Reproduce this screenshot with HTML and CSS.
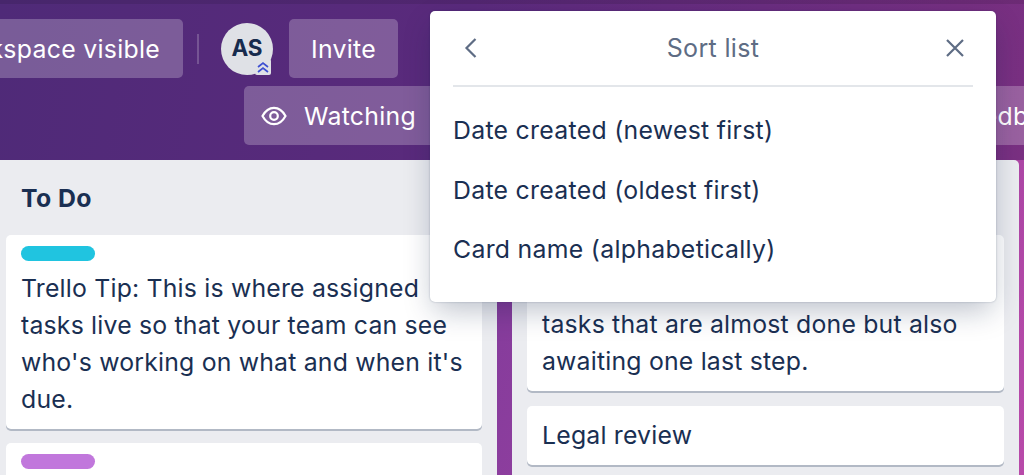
FILE: index.html
```html
<!DOCTYPE html>
<html lang="en">
<head>
<meta charset="utf-8">
<title>Sort list</title>
<link rel="stylesheet" href="styles.css">
</head>
<body>
<div class="board">
  <header class="board-header">
    <div class="header-row row-one">
      <button class="btn btn-workspace">Workspace visible</button>
      <span class="divider"></span>
      <span class="avatar">AS
        <svg class="avatar-badge" viewBox="0 0 16 16" aria-hidden="true">
          <path d="M3 8 L8 4 L13 8 M3 13 L8 9 L13 13" fill="none" stroke="#3d4fd1" stroke-width="1.7"/>
        </svg>
      </span>
      <button class="btn btn-invite">Invite</button>
    </div>
    <div class="header-row row-two">
      <button class="btn btn-watch">
        <svg class="eye" viewBox="0 0 26 20" aria-hidden="true">
          <path d="M1.5 10 C5 3.5 9 1.8 13 1.8 C17 1.8 21 3.5 24.5 10 C21 16.500 17 18.200 13 18.200 C9 18.200 5 16.500 1.500 10 Z" fill="none" stroke="#fff" stroke-width="2.200"/>
          <circle cx="13" cy="10" r="3.800" fill="none" stroke="#fff" stroke-width="2.200"/>
        </svg>
        Watching
      </button>
      <button class="btn btn-feedback">Feedback</button>
    </div>
  </header>
  <main class="lists">
    <section class="list list-todo">
      <h2 class="list-title">To Do</h2>
      <article class="card">
        <span class="label label-cyan"></span>
        <p class="card-text">Trello Tip: This is where assigned tasks live so that your team can see who's working on what and when it's due.</p>
      </article>
      <article class="card">
        <span class="label label-purple"></span>
      </article>
    </section>
    <section class="list list-doing">
      <article class="card card-covered">
        <p class="card-text">tasks that are almost done but also awaiting one last step.</p>
      </article>
      <article class="card">
        <p class="card-text">Legal review</p>
      </article>
    </section>
  </main>
</div>
<aside class="popover">
  <div class="popover-head">
    <svg class="icon-back" viewBox="0 0 14 22" aria-hidden="true"><path d="M11.500 2 L2.500 11 L11.500 20" fill="none" stroke="#5e6c84" stroke-width="2.200"/></svg>
    <span class="popover-title">Sort list</span>
    <svg class="icon-close" viewBox="0 0 20 20" aria-hidden="true"><path d="M2 2 L18 18 M18 2 L2 18" fill="none" stroke="#5e6c84" stroke-width="2.200"/></svg>
  </div>
  <ul class="menu">
    <li>Date created (newest first)</li>
    <li>Date created (oldest first)</li>
    <li>Card name (alphabetically)</li>
  </ul>
</aside>
</body>
</html>
```
FILE: styles.css
```css
* { box-sizing: border-box; }
html, body { margin: 0; height: 475px; overflow: hidden; }
body {
  font-family: Inter, "Liberation Sans", sans-serif;
  color: #1a2f52;
  position: relative;
  width: 1024px;
  background: linear-gradient(112deg, #67368f 0%, #7f3a9a 45%, #b84aa9 100%);
}
.board { width: 1024px; height: 475px; overflow: hidden; display: flex; flex-direction: column; }
.board-header {
  height: 160px; padding-top: 19px; display: flex; flex-direction: column; gap: 8px; flex: none;
  background: linear-gradient(rgba(0,0,0,.1) 0 4px, transparent 4px), linear-gradient(100deg, #4f2a78 0%, #5a2a7c 45%, #7a3082 100%);
}
.header-row { display: flex; align-items: center; height: 59px; flex: none; }
.btn {
  height: 59px; border: 0; border-radius: 5px; background: rgba(255,255,255,.24); flex: none;
  color: #fff; font: 400 24.800px Inter, "Liberation Sans", sans-serif; letter-spacing: .3px; white-space: nowrap; padding: 0 22px;
  display: flex; align-items: center;
}
.btn-workspace { margin-left: -64px; width: 247px; padding: 0 23px 0 0; justify-content: flex-end; }
.divider { width: 2px; height: 30px; margin: 0 22px 0 14px; background: rgba(255,255,255,.2); }
.avatar {
  position: relative; width: 52px; height: 52px; border-radius: 50%; background: #dfe1e6; color: #172b4d; flex: none;
  font-weight: 700; font-size: 22.500px; display: flex; align-items: center; justify-content: center; margin-right: 16px; padding-bottom: 3px;
}
.avatar-badge { position: absolute; left: 34px; top: 36px; width: 16px; height: 16px; background: #dfe1e6; border-radius: 2px; }
.btn-invite { width: 109px; justify-content: center; padding: 0; }
.btn-watch { margin-left: 244px; width: 240px; padding: 0 0 0 17px; gap: 17px; }
.eye { width: 26px; height: 20px; }
.btn-feedback { margin-left: 8px; width: 560px; padding: 0 0 0 462px; }
.lists { display: flex; gap: 15px; height: 315px; flex: none; }
.list { background: #ebecf0; border-radius: 5px 5px 0 0; height: 330px; flex: none; }
.list-todo { width: 497px; padding: 0 15px 0 6px; border-top-left-radius: 0; }
.list-doing { width: 507px; padding: 75px 15px 0; }
.list-title { margin: 0; height: 75px; padding: 20px 0 0 15px; font-size: 24.800px; line-height: 37px; font-weight: 700; letter-spacing: .4px; }
.card {
  background: #fff; border-radius: 5px; box-shadow: 0 2px 0 rgba(9,30,66,.25); padding: 11px 15px; margin-bottom: 14px;
}
.card-covered { padding-top: 71px; margin-bottom: 15px; }
.label { display: block; width: 74px; height: 15px; border-radius: 8px; margin-bottom: 9px; }
.label-cyan { background: #20c4e0; }
.label-purple { background: #c177dc; }
.card-text { margin: 0; font-size: 24.800px; line-height: 37px; letter-spacing: .2px; }
.popover {
  position: absolute; left: 430px; top: 11px; width: 566px; height: 291px; background: #fff; border-radius: 5px;
  box-shadow: 0 12px 30px -4px rgba(9,30,66,.28), 0 0 2px rgba(9,30,66,.3); padding: 0 23px;
}
.popover-head { height: 76px; border-bottom: 2px solid #e3e6ea; display: flex; align-items: center; justify-content: space-between; position: relative; padding: 0 8px 0 11px; }
.popover-title { font-size: 25px; letter-spacing: .35px; color: #5e6c84; position: absolute; left: 0; right: 0; text-align: center; }
.icon-back { width: 14px; height: 22px; }
.icon-close { width: 20px; height: 20px; }
.menu { list-style: none; margin: 14px 0 0; padding: 0; }
.menu li { height: 59.500px; line-height: 59.500px; font-size: 24.800px; letter-spacing: .3px; color: #1a2f52; }
```
